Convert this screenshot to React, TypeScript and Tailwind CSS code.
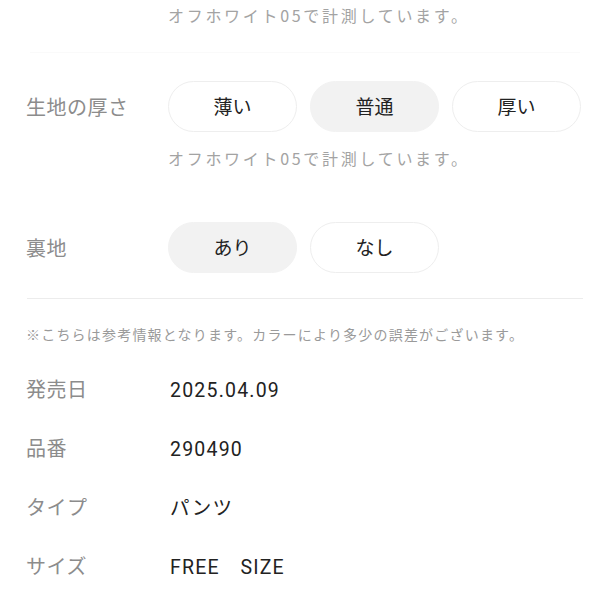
const font = { fontFamily: '"Noto Sans CJK JP", "Noto Sans", sans-serif' };
const valueFont = { fontFamily: 'Roboto, "Noto Sans CJK JP", sans-serif' };

type Option = { label: string; active?: boolean };

const thickness: Option[] = [{ label: "薄い" }, { label: "普通", active: true }, { label: "厚い" }];
const lining: Option[] = [{ label: "あり", active: true }, { label: "なし" }];

const specs = [
  { label: "発売日", value: "2025.04.09" },
  { label: "品番", value: "290490" },
  { label: "タイプ", value: "パンツ" },
  { label: "サイズ", value: "FREE　SIZE" },
];

function Pill({ label, active }: Option) {
  return (
    <div
      className={
        "w-[129px] h-[51px] rounded-full flex items-center justify-center text-[19px] text-[#222] border " +
        (active ? "bg-[#f2f2f2] border-[#f2f2f2]" : "bg-white border-[#eeeeee]")
      }
    >
      {label}
    </div>
  );
}

function Caption() {
  return <p className="text-[16px] leading-6 tracking-[2.7px] text-[#a3a3a3]">オフホワイト05で計測しています。</p>;
}

export default function App() {
  return (
    <div className="w-[610px] h-[610px] bg-white overflow-hidden" style={font}>
      <div className="pl-[168px] pt-[3px]">
        <Caption />
      </div>
      <div className="mx-[30px] mt-[25px] border-t border-[#fafafa]" />

      {/* 生地の厚さ */}
      <div className="mt-[28px] flex items-center pl-[26px]">
        <span className="w-[142px] text-[20px] text-[#8c8c8c] tracking-[0.5px]">生地の厚さ</span>
        <div className="flex gap-[13px]">
          {thickness.map((o) => (
            <Pill key={o.label} {...o} />
          ))}
        </div>
      </div>
      <div className="pl-[168px] mt-[14px]">
        <Caption />
      </div>

      {/* 裏地 */}
      <div className="mt-[52px] flex items-center pl-[26px]">
        <span className="w-[142px] text-[20px] text-[#8c8c8c] tracking-[0.5px]">裏地</span>
        <div className="flex gap-[13px]">
          {lining.map((o) => (
            <Pill key={o.label} {...o} />
          ))}
        </div>
      </div>

      <div className="mx-[27px] mt-[25px] border-t border-[#ececec]" />

      <p className="mt-[25px] pl-[26px] text-[14px] leading-5 tracking-[1.2px] text-[#9a9a9a]">
        ※こちらは参考情報となります。カラーにより多少の誤差がございます。
      </p>

      <div className="mt-[15px] flex flex-col">
        {specs.map((s) => (
          <div key={s.label} className="h-[59px] flex items-center pl-[26px]">
            <span className="w-[144px] text-[20px] text-[#8c8c8c] tracking-[0.5px]">{s.label}</span>
            <span className="pt-[5px] text-[19.5px] text-[#222] tracking-[1.2px]" style={valueFont}>
              {s.value}
            </span>
          </div>
        ))}
      </div>
    </div>
  );
}
